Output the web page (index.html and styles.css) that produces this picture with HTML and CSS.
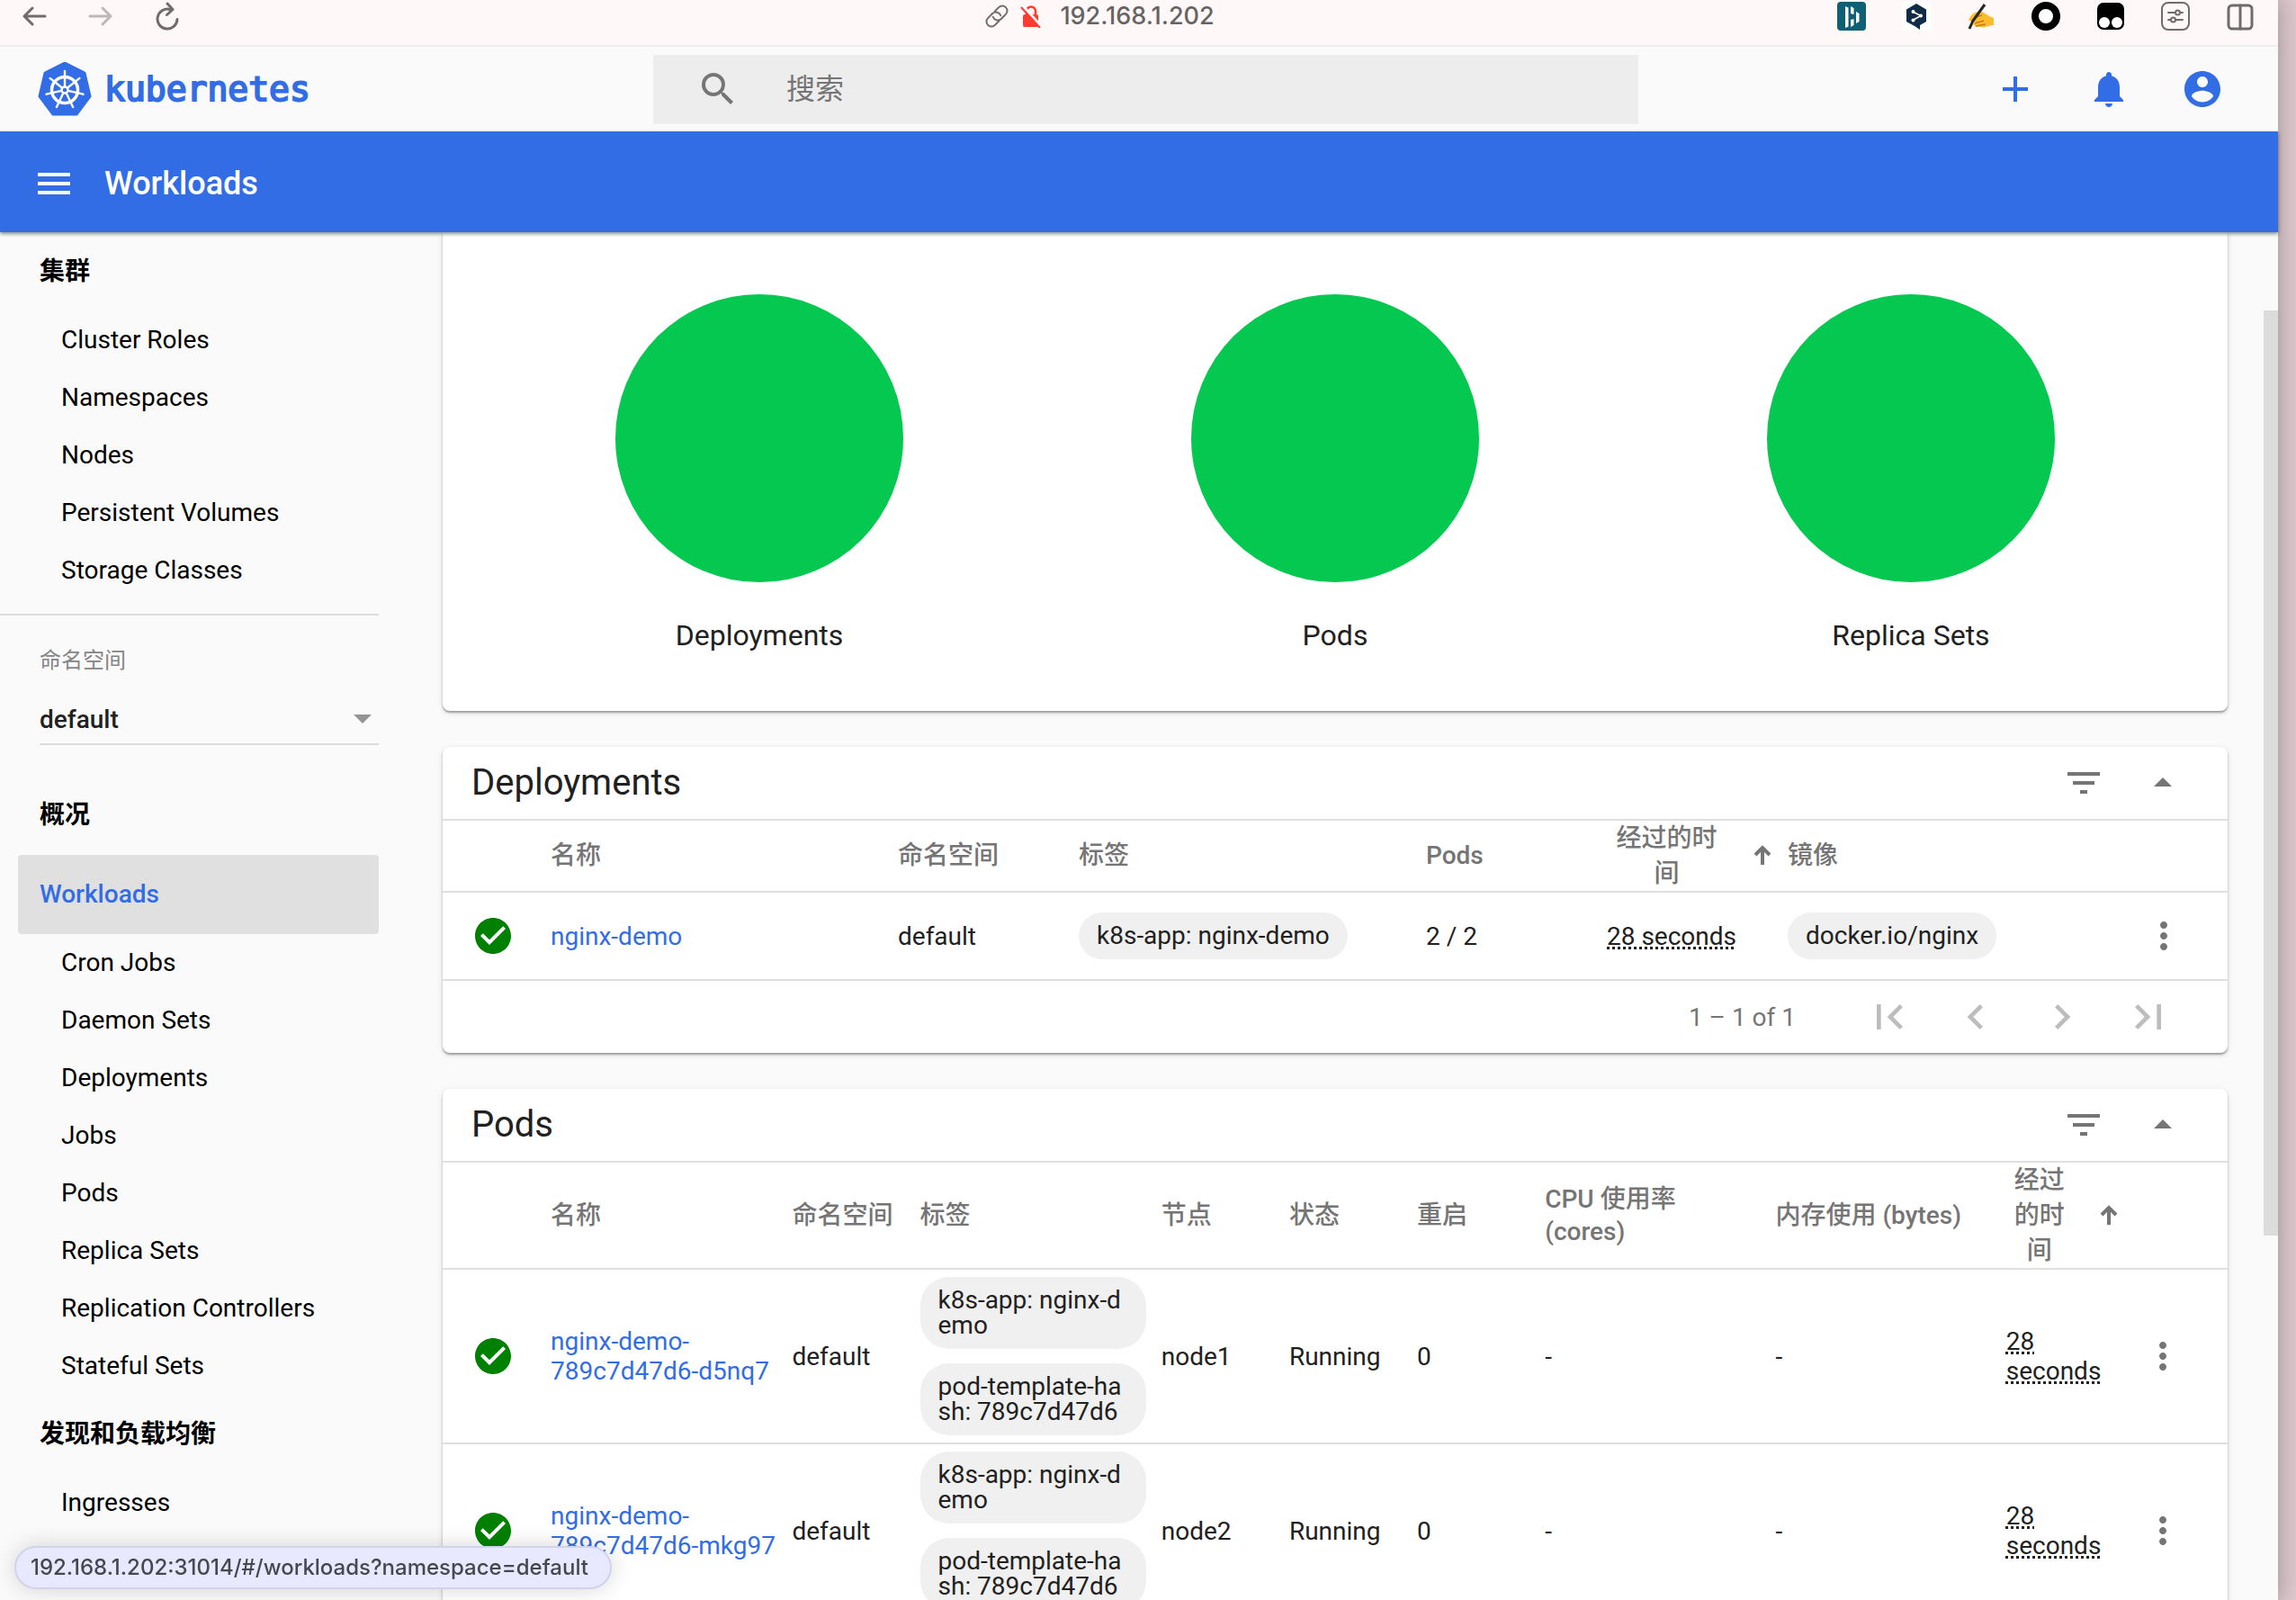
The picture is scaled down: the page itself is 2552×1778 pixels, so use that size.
FILE: index.html
```html
<!DOCTYPE html>
<html lang="zh-CN">
<head>
<meta charset="utf-8">
<title>Kubernetes Dashboard</title>
<link rel="stylesheet" href="styles.css">
</head>
<body>
<svg class="defs" aria-hidden="true">
  <symbol id="i-check" viewBox="0 0 24 24"><path d="M12 2C6.480 2 2 6.480 2 12s4.480 10 10 10 10-4.480 10-10S17.520 2 12 2zm-2 15l-5-5 1.410-1.410L10 14.170l7.590-7.590L19 8l-9 9z"/></symbol>
  <symbol id="i-more" viewBox="0 0 24 24"><path d="M12 8c1.100 0 2-.9 2-2s-.9-2-2-2-2 .9-2 2 .9 2 2 2zm0 2c-1.100 0-2 .9-2 2s.9 2 2 2 2-.9 2-2-.9-2-2-2zm0 6c-1.100 0-2 .9-2 2s.9 2 2 2 2-.9 2-2-.9-2-2-2z"/></symbol>
  <symbol id="i-filter" viewBox="0 0 24 24"><path d="M10 18h4v-2h-4v2zM3 6v2h18V6H3zm3 7h12v-2H6v2z"/></symbol>
  <symbol id="i-up" viewBox="0 0 24 24"><path d="M7 14l5-5 5 5z"/></symbol>
  <symbol id="i-sort" viewBox="0 0 24 24"><path d="M12 22V4M4 11l8-8 8 8" fill="none" stroke="currentColor" stroke-width="4"/></symbol>
</svg>
<div class="window">
  <div class="browser-bar">
    <div class="bar-left">
      <button class="bare" aria-label="Back"><svg width="28" height="24" viewBox="0 0 28 24"><path d="M26 12H3M12 3L3 12l9 9" class="line"/></svg></button>
      <button class="bare faded" aria-label="Forward"><svg width="28" height="24" viewBox="0 0 28 24"><path d="M2 12h23M16 3l9 9-9 9" class="line"/></svg></button>
      <button class="bare" aria-label="Reload"><svg width="28" height="32" viewBox="0 0 28 32"><path d="M17 8.500A11 11 0 1 0 25 19.500M14 2l6 6.500-6.500 6" class="line"/></svg></button>
    </div>
    <div class="address">
      <svg width="28" height="28" viewBox="0 0 28 28"><g transform="rotate(-45 14 14)"><path d="M12 19.500H5.500a5.500 5.500 0 0 1 0-11H13a5.500 5.500 0 0 1 4.500 8M16 8.500h6.500a5.500 5.500 0 0 1 0 11H15a5.500 5.500 0 0 1-4.500-8" class="line thin"/></g></svg>
      <svg class="lock" width="24" height="26" viewBox="0 0 24 26"><path d="M7 13V7.500a5 5 0 0 1 10 0V12" fill="none" stroke="#ff3b30" stroke-width="2.600"/><rect x="3" y="11" width="17" height="14" rx="2" fill="#ff3b30"/><path d="M3 1.500L24 25" stroke="#fff8f8" stroke-width="3"/><path d="M1 3l21 23" stroke="#ff3b30" stroke-width="2"/></svg>
      <span>192.168.1.202</span>
    </div>
    <div class="extensions">
      <svg width="32" height="32" viewBox="0 0 32 32"><rect width="32" height="32" rx="4" fill="#0f6074"/><path d="M9 5l3.500 1.500v21L9 29zM15 5l3.500 2v7L15 13zM15 20l3.500-1v7L15 28zM21 11l3.500 2v9L21 24z" fill="#fff"/></svg>
      <svg width="32" height="32" viewBox="0 0 32 32"><rect width="32" height="32" rx="4" fill="#fff"/><path d="M16 2l11 6.500v13.500l-7 4v5l-5-3.500L5 22V8.500z" fill="#0f2b46"/><path d="M12 11l9 4.500-9 5" fill="none" stroke="#fff" stroke-width="1.500"/><circle cx="12.500" cy="11" r="2" fill="#fff"/><circle cx="21" cy="15.500" r="2" fill="#fff"/><circle cx="12.500" cy="20.500" r="2" fill="#fff"/></svg>
      <svg width="32" height="32" viewBox="0 0 32 32"><path d="M2 20c3-6 7-9 12-9 4-.5 7 2 11 5l5 2v8c-5 0-8 3-14 2-5 0-8-1-9-3 1-1 2-2 1-3-2 0-4 0-6-2z" fill="#fbbd2e"/><path d="M9 17l8-2M9 24l10-3M10 27l11-2" stroke="#c67a14" stroke-width="1.500"/><path d="M20 3L7 21l-4 9" fill="none" stroke="#262626" stroke-width="3"/></svg>
      <svg width="32" height="32" viewBox="0 0 32 32"><circle cx="16" cy="16" r="12" fill="#fff" stroke="#000" stroke-width="8"/></svg>
      <svg width="32" height="32" viewBox="0 0 32 32"><rect x="1" y="1" width="30" height="30" rx="7"/><circle cx="9" cy="23" r="6" fill="#fff"/><circle cx="23" cy="23" r="6" fill="#fff"/></svg>
      <svg width="32" height="32" viewBox="0 0 32 32"><rect x="1" y="1" width="30" height="30" rx="7" class="line thin"/><path d="M8 12h8M21 12h3M8 20h3M16 20h8" class="line thin"/><circle cx="18.500" cy="12" r="2.500" class="line thin"/><circle cx="13.500" cy="20" r="2.500" class="line thin"/></svg>
      <svg width="32" height="32" viewBox="0 0 32 32"><rect x="3" y="4" width="26" height="26" rx="4" class="line"/><path d="M16 4v26" class="line"/></svg>
    </div>
  </div>

  <header class="app-header">
    <a class="brand" href="#/">
      <svg width="60" height="60" viewBox="0 0 60 60"><path d="M30 1l22 11 6 26-15 20H17L2 38 8 12z" fill="#326de6" stroke="#326de6" stroke-width="3" stroke-linejoin="round"/><g stroke="#fff" fill="none" transform="translate(30 31)"><circle r="14.500" stroke-width="3.500"/><g stroke-width="2.400" stroke-linecap="round"><path id="spoke" d="M0-4V-21"/><use href="#spoke" transform="rotate(51.430)"/><use href="#spoke" transform="rotate(102.860)"/><use href="#spoke" transform="rotate(154.290)"/><use href="#spoke" transform="rotate(205.710)"/><use href="#spoke" transform="rotate(257.140)"/><use href="#spoke" transform="rotate(308.570)"/></g><circle r="3.500" stroke-width="2.500"/></g></svg>
      <span>kubernetes</span>
    </a>
    <label class="search">
      <svg class="icon" viewBox="0 0 24 24" aria-label="搜索"><path d="M15.500 14h-.79l-.28-.27A6.471 6.471 0 0 0 16 9.500 6.500 6.500 0 1 0 9.500 16c1.610 0 3.090-.59 4.230-1.570l.27.28v.79l5 4.990L20.490 19l-4.990-5zm-6 0C7.010 14 5 11.990 5 9.500S7.010 5 9.500 5 14 7.010 14 9.500 11.990 14 9.500 14z"/></svg>
      <input type="text" placeholder="搜索">
    </label>
    <div class="header-actions">
      <button class="bare" aria-label="Create"><svg class="icon" viewBox="0 0 24 24"><path d="M19 13h-6v6h-2v-6H5v-2h6V5h2v6h6v2z"/></svg></button>
      <button class="bare" aria-label="Notifications"><svg class="icon" viewBox="0 0 24 24"><path d="M12 22c1.100 0 2-.9 2-2h-4c0 1.100.89 2 2 2zm6-6v-5c0-3.070-1.640-5.640-4.500-6.320V4c0-.83-.67-1.500-1.500-1.500s-1.500.67-1.500 1.500v.68C7.630 5.360 6 7.920 6 11v5l-2 2v1h16v-1l-2-2z"/></svg></button>
      <button class="bare" aria-label="Account"><svg class="icon" viewBox="0 0 24 24"><path d="M12 2C6.480 2 2 6.480 2 12s4.480 10 10 10 10-4.480 10-10S17.520 2 12 2zm0 3c1.660 0 3 1.340 3 3s-1.340 3-3 3-3-1.340-3-3 1.340-3 3-3zm0 14.200c-2.500 0-4.710-1.280-6-3.220.03-1.990 4-3.080 6-3.080 1.990 0 5.970 1.090 6 3.080-1.290 1.940-3.500 3.220-6 3.220z"/></svg></button>
    </div>
  </header>

  <div class="toolbar">
    <button class="bare" aria-label="Menu"><svg class="icon" viewBox="0 0 24 24"><path d="M3 18h18v-2H3v2zm0-5h18v-2H3v2zm0-7v2h18V6H3z"/></svg></button>
    <h1>Workloads</h1>
  </div>

  <div class="body">
    <nav class="sidebar">
      <h2>集群</h2>
      <a href="#/clusterrole">Cluster Roles</a>
      <a href="#/namespace">Namespaces</a>
      <a href="#/node">Nodes</a>
      <a href="#/persistentvolume">Persistent Volumes</a>
      <a href="#/storageclass">Storage Classes</a>
      <div class="namespace">
        <label for="ns">命名空间</label>
        <div class="select">
          <select id="ns"><option>default</option></select>
          <svg width="20" height="10" viewBox="0 0 20 10"><path d="M0 0h20L10 10z"/></svg>
        </div>
      </div>
      <h2>概况</h2>
      <a class="active" href="#/workloads">Workloads</a>
      <a href="#/cronjob">Cron Jobs</a>
      <a href="#/daemonset">Daemon Sets</a>
      <a href="#/deployment">Deployments</a>
      <a href="#/job">Jobs</a>
      <a href="#/pod">Pods</a>
      <a href="#/replicaset">Replica Sets</a>
      <a href="#/replicationcontroller">Replication Controllers</a>
      <a href="#/statefulset">Stateful Sets</a>
      <h2>发现和负载均衡</h2>
      <a href="#/ingress">Ingresses</a>
    </nav>

    <main>
      <section class="card charts">
        <figure><div class="pie"></div><figcaption>Deployments</figcaption></figure>
        <figure><div class="pie"></div><figcaption>Pods</figcaption></figure>
        <figure><div class="pie"></div><figcaption>Replica Sets</figcaption></figure>
      </section>

      <section class="card">
        <div class="card-title">
          <h2>Deployments</h2>
          <button class="bare" aria-label="Filter"><svg class="icon"><use href="#i-filter"/></svg></button>
          <button class="bare" aria-label="Collapse"><svg class="icon"><use href="#i-up"/></svg></button>
        </div>
        <table>
          <colgroup><col class="c-status"><col class="d-wide"><col class="d-narrow"><col class="d-wide"><col class="d-narrow"><col class="d-narrow"><col class="d-wide"><col class="c-menu"></colgroup>
          <thead>
            <tr><th></th><th>名称</th><th>命名空间</th><th>标签</th><th>Pods</th><th><button class="sort"><span>经过的时间</span><svg><use href="#i-sort"/></svg></button></th><th>镜像</th><th></th></tr>
          </thead>
          <tbody>
            <tr>
              <td class="status"><svg class="icon"><use href="#i-check"/></svg></td>
              <td><a href="#/deployment/default/nginx-demo">nginx-demo</a></td>
              <td>default</td>
              <td class="chips"><span class="chip">k8s-app: nginx-demo</span></td>
              <td>2 / 2</td>
              <td><span class="age">28 seconds</span></td>
              <td class="chips"><span class="chip">docker.io/nginx</span></td>
              <td><button class="bare" aria-label="Actions"><svg class="icon"><use href="#i-more"/></svg></button></td>
            </tr>
          </tbody>
        </table>
        <div class="paginator">
          <span>1 – 1 of 1</span>
          <button class="bare" disabled aria-label="First page"><svg viewBox="0 0 24 24"><path d="M18.410 16.590L13.820 12l4.590-4.590L17 6l-6 6 6 6zM6 6h2v12H6z"/></svg></button>
          <button class="bare" disabled aria-label="Previous page"><svg viewBox="0 0 24 24"><path d="M15.410 7.410L14 6l-6 6 6 6 1.410-1.410L10.830 12z"/></svg></button>
          <button class="bare" disabled aria-label="Next page"><svg viewBox="0 0 24 24"><path d="M10 6L8.590 7.410 13.170 12l-4.580 4.590L10 18l6-6z"/></svg></button>
          <button class="bare" disabled aria-label="Last page"><svg viewBox="0 0 24 24"><path d="M5.590 7.410L10.180 12l-4.590 4.590L7 18l6-6-6-6zM16 6h2v12h-2z"/></svg></button>
        </div>
      </section>

      <section class="card">
        <div class="card-title">
          <h2>Pods</h2>
          <button class="bare" aria-label="Filter"><svg class="icon"><use href="#i-filter"/></svg></button>
          <button class="bare" aria-label="Collapse"><svg class="icon"><use href="#i-up"/></svg></button>
        </div>
        <table>
          <colgroup><col class="c-status"><col class="p-wide"><col class="p-narrow"><col class="p-wide"><col class="p-narrow"><col class="p-narrow"><col class="p-narrow"><col class="p-metric"><col class="p-metric"><col class="p-narrow"><col class="c-menu"></colgroup>
          <thead>
            <tr><th></th><th>名称</th><th>命名空间</th><th>标签</th><th>节点</th><th>状态</th><th>重启</th><th>CPU 使用率<br>(cores)</th><th>内存使用 (bytes)</th><th><button class="sort"><span>经过的时间</span><svg><use href="#i-sort"/></svg></button></th><th></th></tr>
          </thead>
          <tbody>
            <tr>
              <td class="status"><svg class="icon"><use href="#i-check"/></svg></td>
              <td><a href="#/pod/default/nginx-demo-789c7d47d6-d5nq7">nginx-demo-<wbr>789c7d47d6-d5nq7</a></td>
              <td>default</td>
              <td class="chips"><span class="chip">k8s-app: nginx-demo</span><span class="chip">pod-template-hash: 789c7d47d6</span></td>
              <td>node1</td><td>Running</td><td>0</td><td>-</td><td>-</td>
              <td><span class="age">28<br>seconds</span></td>
              <td><button class="bare" aria-label="Actions"><svg class="icon"><use href="#i-more"/></svg></button></td>
            </tr>
            <tr>
              <td class="status"><svg class="icon"><use href="#i-check"/></svg></td>
              <td><a href="#/pod/default/nginx-demo-789c7d47d6-mkg97">nginx-demo-<wbr>789c7d47d6-mkg97</a></td>
              <td>default</td>
              <td class="chips"><span class="chip">k8s-app: nginx-demo</span><span class="chip">pod-template-hash: 789c7d47d6</span></td>
              <td>node2</td><td>Running</td><td>0</td><td>-</td><td>-</td>
              <td><span class="age">28<br>seconds</span></td>
              <td><button class="bare" aria-label="Actions"><svg class="icon"><use href="#i-more"/></svg></button></td>
            </tr>
          </tbody>
        </table>
      </section>
    </main>
    <div class="scrollbar"><div class="thumb"></div></div>
  </div>
</div>
<div class="link-preview">192.168.1.202:31014/#/workloads?namespace=default</div>
</body>
</html>
```
FILE: styles.css
```css
* { box-sizing: border-box; }

body {
  margin: 0;
  height: 100vh;
  overflow: hidden;
  background: #dcc8cd;
  color: #212121;
  font: 28px/33px Roboto, "Noto Sans CJK SC", sans-serif;
}

h1, h2, figure { margin: 0; }
a { color: #326de6; text-decoration: none; }
svg { display: block; flex: none; }
.defs { display: none; }
.icon { width: 48px; height: 48px; fill: currentColor; }

.bare {
  display: block;
  padding: 0;
  border: 0;
  background: none;
  color: inherit;
  font: inherit;
}

.line {
  fill: none;
  stroke: #706c6b;
  stroke-width: 3px;
  stroke-linecap: round;
  stroke-linejoin: round;
}
.line.thin { stroke-width: 2px; }

.window {
  display: flex;
  flex-direction: column;
  height: 100%;
  margin-right: 20px;
  background: #fafafa;
  box-shadow: 0 0 24px rgba(0, 0, 0, .3);
}

/* Browser bar */
.browser-bar {
  display: grid;
  grid-template-columns: 1095fr auto 1183fr;
  flex: none;
  height: 52px;
  border-bottom: 2px solid #ededed;
  background: #fff8f8;
}
.bar-left, .address, .extensions {
  display: flex;
  align-items: center;
  height: 36px;
}
.bar-left { gap: 46px; padding-left: 24px; }
.faded { opacity: .45; }
.address {
  gap: 12px;
  color: #676362;
  font: 500 27px/36px Inter, sans-serif;
}
.address span { padding-left: 8px; }
.extensions { justify-content: flex-end; gap: 40px; padding-right: 26px; }

/* Application header */
.app-header {
  display: grid;
  grid-template-columns: 726fr 1095fr 711fr;
  align-items: center;
  flex: none;
  height: 94px;
}
.brand {
  display: flex;
  align-items: center;
  gap: 14px;
  padding-left: 42px;
  font: 38px/60px "DejaVu Sans Mono", monospace;
  -webkit-text-stroke: 2px #326de6;
}
.search {
  display: flex;
  align-items: center;
  gap: 52px;
  height: 77px;
  padding: 0 48px;
  background: #ededed;
  color: #757575;
}
.search input {
  flex: 1;
  min-width: 0;
  padding: 0;
  border: 0;
  background: none;
  font: 32px/48px Roboto, "Noto Sans CJK SC", sans-serif;
}
.search input::placeholder { color: #757575; }
.header-actions {
  display: flex;
  justify-content: flex-end;
  gap: 56px;
  padding-right: 60px;
  color: #326de6;
}

.toolbar {
  position: relative;
  display: flex;
  align-items: center;
  flex: none;
  gap: 32px;
  height: 112px;
  padding: 4px 0 0 36px;
  background: #326de6;
  box-shadow: 0 2px 4px rgba(0, 0, 0, .45);
  color: #fff;
}
.toolbar h1 { font-size: 36px; font-weight: 500; line-height: 48px; }

.body {
  display: grid;
  grid-template-columns: 421px minmax(0, 1fr) 16px;
  grid-template-rows: minmax(0, 1fr);
  flex: 1;
  min-height: 0;
  overflow: hidden;
}

/* Sidebar */
.sidebar { color: #000; }
.sidebar h2 {
  padding-left: 44px;
  font-size: 28px;
  font-weight: 700;
  line-height: 88px;
}
.sidebar a {
  display: block;
  padding-left: 68px;
  color: inherit;
  line-height: 64px;
}
.sidebar .active {
  margin-left: 20px;
  padding-left: 24px;
  border-radius: 4px;
  background: #e0e0e0;
  color: #326de6;
  font-weight: 500;
  line-height: 88px;
}
.namespace {
  margin: 16px 0 34px;
  padding: 32px 0 0 44px;
  border-top: 2px solid #dcdcdc;
}
.namespace label {
  display: block;
  color: #858585;
  font-size: 24px;
  line-height: 36px;
}
.select {
  display: flex;
  align-items: center;
  margin-top: 20px;
  padding-right: 8px;
  border-bottom: 2px solid #dcdcdc;
}
.select select {
  flex: 1;
  height: 54px;
  padding: 0;
  border: 0;
  appearance: none;
  background: none;
  color: #212121;
  font: 500 28px/33px Roboto, sans-serif;
}
.select svg { fill: #949494; }

/* Cards */
main {
  display: flex;
  flex-direction: column;
  gap: 40px;
  padding: 0 40px 0 71px;
}
.card {
  flex: none;
  border-radius: 8px;
  background: #fff;
  box-shadow: 0 2px 2px rgba(0, 0, 0, .3), 0 2px 6px rgba(0, 0, 0, .14);
}
.charts {
  display: grid;
  grid-template-columns: repeat(3, 1fr);
  padding: 69px 32px 64px;
  border-radius: 0 0 8px 8px;
}
.charts figure {
  display: flex;
  flex-direction: column;
  align-items: center;
  gap: 39px;
}
.pie { width: 320px; height: 320px; border-radius: 50%; background: #05c850; }
figcaption { font-size: 32px; line-height: 40px; }

.card-title {
  display: flex;
  align-items: center;
  gap: 40px;
  height: 82px;
  padding: 0 48px 0 32px;
  border-bottom: 2px solid #e0e0e0;
  color: #757575;
}
.card-title h2 {
  flex: 1;
  color: #212121;
  font-size: 40px;
  font-weight: 400;
  line-height: 48px;
}

/* Tables */
table {
  width: 100%;
  table-layout: fixed;
  border-collapse: separate;
  border-spacing: 0;
}
th, td {
  padding: 0;
  border-bottom: 2px solid #e0e0e0;
  text-align: left;
  vertical-align: middle;
}
th { height: 80px; color: #757575; font-weight: 500; line-height: 36px; }
td { height: 98px; }
td .bare { color: #757575; margin-left: 8px; }
.c-status { width: 120px; }
.c-menu { width: 104px; }
.d-wide { width: 386px; }
.d-narrow { width: 201px; }
.p-wide { width: 268px; }
.p-narrow { width: 142px; }
.p-metric { width: 256px; }
.status { padding-left: 32px; color: #008000; }

.sort {
  display: flex;
  align-items: center;
  width: 100%;
  padding: 0 16px 0 0;
  border: 0;
  background: none;
  color: inherit;
  font: inherit;
  line-height: 39px;
}
.sort span { flex: 1; text-align: center; }
.sort svg { width: 24px; height: 24px; margin-left: 28px; }

.chips { padding: 8px 17px 8px 0; }
.chip {
  display: block;
  width: fit-content;
  padding: 12px 20px;
  border-radius: 32px;
  background: #f0f0f0;
  line-height: 28px;
  word-break: break-all;
}
.chip + .chip { margin-top: 16px; }
.age {
  text-decoration: underline dotted 3px;
  text-underline-offset: 2px;
}

.paginator {
  display: flex;
  align-items: center;
  justify-content: flex-end;
  height: 80px;
  padding-right: 40px;
  color: #757575;
}
.paginator span { margin-right: 56px; }
.paginator button { padding: 0 20px; color: #bdbdbd; }
.paginator svg { width: 56px; height: 56px; fill: currentColor; }

.scrollbar { display: flex; flex-direction: column; }
.scrollbar::before { content: ""; flex: 87; }
.scrollbar::after { content: ""; flex: 405; }
.thumb { flex: 1028; background: #dcdcdc; }

.link-preview {
  position: fixed;
  bottom: 12px;
  left: 16px;
  padding: 0 24px 0 16px;
  border: 2px solid #d2d2ec;
  border-radius: 24px;
  background: #e8e9ff;
  box-shadow: 0 0 24px rgba(0, 0, 0, .16);
  color: #47474f;
  font: 500 24px/44px Inter, sans-serif;
}
```
